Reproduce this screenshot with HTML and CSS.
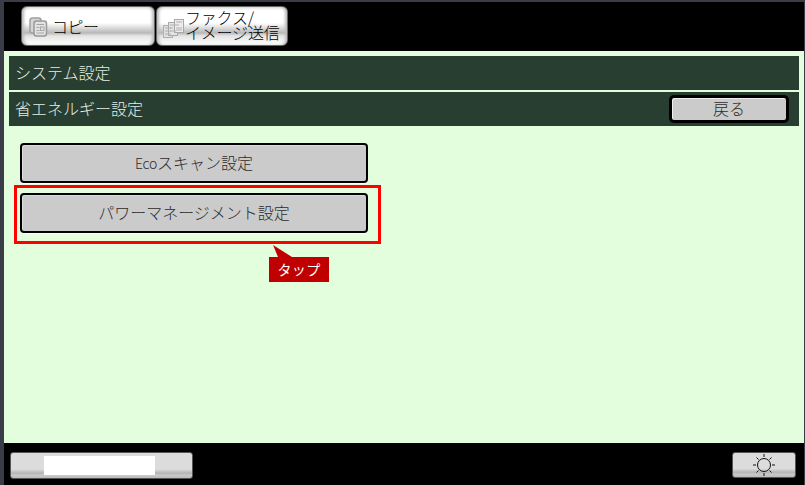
FILE: index.html
```html
<!DOCTYPE html>
<html lang="ja">
<head>
<meta charset="utf-8">
<title>省エネルギー設定</title>
<link rel="stylesheet" href="styles.css">
</head>
<body>
<div class="screen">
  <nav class="tabs">
    <button class="tab tab-copy">
      <svg class="tab-icon" width="19" height="20" viewBox="0 0 19 20">
        <rect x="1" y="1" width="11" height="15" rx="2.500" fill="#d6d6d6" stroke="#a0a0a0" stroke-width="1.500"/>
        <rect x="5" y="4" width="12.500" height="15" rx="2.500" fill="#e2e2e2" stroke="#999" stroke-width="1.500"/>
        <path d="M7.500 7.500h7.500M7.500 10.500h3M7.500 13.500h3M7.500 16h7.500" stroke="#a5a5a5" fill="none"/>
        <rect x="11.500" y="10" width="3.500" height="3.500" fill="none" stroke="#a5a5a5"/>
      </svg>
      <span>コピー</span>
    </button>
    <button class="tab tab-fax">
      <svg class="tab-icon" width="21" height="19" viewBox="0 0 21 19">
        <rect x="0.500" y="6.500" width="9" height="12" fill="#e0e0e0" stroke="#b0b0b0"/>
        <rect x="5.500" y="3.500" width="9" height="13" fill="#e4e4e4" stroke="#a8a8a8"/>
        <rect x="11.500" y="0.500" width="9" height="13" fill="#ececec" stroke="#a8a8a8"/>
        <path d="M2 9h6M2 12h6M2 15h6M7 6h6M7 9h3M7 12h6M13 3h6M13 6h3M13 9h6M13 11h6" stroke="#b0b0b0" fill="none"/>
      </svg>
      <span class="tab-label">ファクス/<br>イメージ送信</span>
    </button>
  </nav>
  <main class="panel">
    <div class="bar bar-title">システム設定</div>
    <div class="bar bar-sub">
      <span>省エネルギー設定</span>
      <button class="btn back"><span class="lift">戻る</span></button>
    </div>
    <div class="menu">
      <button class="btn item first"><span class="lift"><span class="latin">Eco</span>スキャン設定</span></button>
      <div class="highlight">
        <button class="btn item"><span class="lift">パワーマネージメント設定</span></button>
        <div class="callout">タップ</div>
      </div>
    </div>
  </main>
  <footer class="footer">
    <div class="status"><div class="status-fill"></div></div>
    <button class="sun">
      <svg width="22" height="22" viewBox="0 0 22 22" fill="none" stroke="#111">
        <circle cx="11" cy="11" r="6.500"/>
        <path d="M11 0v3M11 19v3M0 11h3M19 11h3M3.500 3.500l2 2M16.500 16.500l2 2M18.500 3.500l-2 2M5.500 16.500l-2 2"/>
      </svg>
    </button>
  </footer>
</div>
</body>
</html>
```
FILE: styles.css
```css
* { box-sizing: border-box; }
html, body { margin: 0; padding: 0; background: #000; }
.screen {
  width: 805px;
  height: 485px;
  display: flex;
  flex-direction: column;
  background: #000;
  border-left: 4px solid #3a3d48;
  border-right: 1px solid #3a3d48;
  border-top: 2px solid #3a3d48;
  font-family: "Noto Sans CJK JP", "Liberation Sans", sans-serif;
  font-size: 16px;
  font-weight: 300;
}
button { font-family: inherit; font-size: inherit; font-weight: inherit; padding: 0; margin: 0; }
.tabs {
  height: 49px;
  flex: none;
  display: flex;
  gap: 1px;
  padding: 4px 0 0 17px;
  align-items: flex-start;
}
.tab {
  height: 40px;
  display: flex;
  align-items: center;
  border: 1px solid #666;
  border-radius: 6px;
  color: #000;
  background: linear-gradient(#e8e8e8 0, #fff 10%, #fff 42%, #b8b8b8 68%, #e4e4e4 76%, #fff 100%);
  box-shadow: inset 3px 0 3px -1px #bbb, inset -3px 0 3px -1px #bbb;
}
.tab-copy { width: 134px; padding-left: 7px; gap: 4px; }
.tab-copy span { margin-top: -1px; letter-spacing: -0.5px; }
.tab-fax { width: 132px; padding-left: 6px; gap: 1px; align-items: flex-start; }
.tab-icon { flex: none; }
.tab-copy .tab-icon { margin-top: 1px; }
.tab-fax .tab-icon { margin-top: 12px; }
.tab-label {
  display: block;
  text-align: left;
  line-height: 15px;
  letter-spacing: -0.2px;
  margin-top: 3px;
}
.panel {
  height: 392px;
  flex: none;
  background: #e2fedc;
  padding: 5px 5px 0 5px;
  display: flex;
  flex-direction: column;
}
.bar {
  background: #273e31;
  color: #e6eee6;
  padding-left: 6px;
  display: flex;
  align-items: center;
  flex: none;
}
.bar-title { height: 34px; margin-bottom: 2px; padding-bottom: 2px; }
.bar-sub { height: 34px; justify-content: space-between; padding-right: 11px; }
.bar-sub > span { margin-top: -2px; }
.btn {
  background: #cbcbcb;
  color: #2c2c2c;
  border: 2px solid #000;
  border-radius: 4px;
}
.lift { display: block; margin-top: -3px; }
.latin { font-size: 14px; letter-spacing: -0.3px; }
.back { width: 118px; height: 26px; line-height: 1; box-shadow: 0 0 0 1px #000, inset 1px 1px 0 #eee; }
.menu {
  display: flex;
  flex-direction: column;
  align-items: flex-start;
  padding: 17px 0 0 5px;
}
.item {
  width: 348px;
  height: 40px;
  line-height: 1;
  box-shadow: inset 1px 1px 0 #ddd, 0 1px 0 #fff;
}
.first { margin: 0 0 2px 6px; }
.highlight {
  position: relative;
  width: 367px;
  height: 59px;
  border: 3px solid #f00;
  padding: 5px 10px 8px 3px;
}
.callout {
  position: absolute;
  left: 252px;
  top: 69px;
  width: 60px;
  height: 25px;
  background: #c00000;
  color: #fff;
  font-size: 14px;
  font-weight: 400;
  line-height: 25px;
  text-align: center;
  letter-spacing: 0.3px;
}
.callout::before {
  content: "";
  position: absolute;
  left: 0;
  top: -12px;
  width: 23px;
  height: 12px;
  background: #c00000;
  clip-path: polygon(4px 0, 23px 12px, 9px 12px);
}
.footer {
  flex: 1;
  display: flex;
  justify-content: space-between;
  align-items: flex-start;
  padding: 9px 8px 0 6px;
}
.status, .sun {
  height: 27px;
  border: 1px solid #555;
  border-radius: 3px;
  background: linear-gradient(#dcdcdc 0, #dcdcdc 65%, #b5b5b5 80%, #c8c8c8 90%, #bbb 100%);
}
.status { width: 183px; padding: 3px 0 0 33px; }
.status-fill { width: 111px; height: 19px; background: #fff; }
.sun {
  width: 64px;
  height: 26px;
  display: flex;
  align-items: center;
  justify-content: center;
}
```
